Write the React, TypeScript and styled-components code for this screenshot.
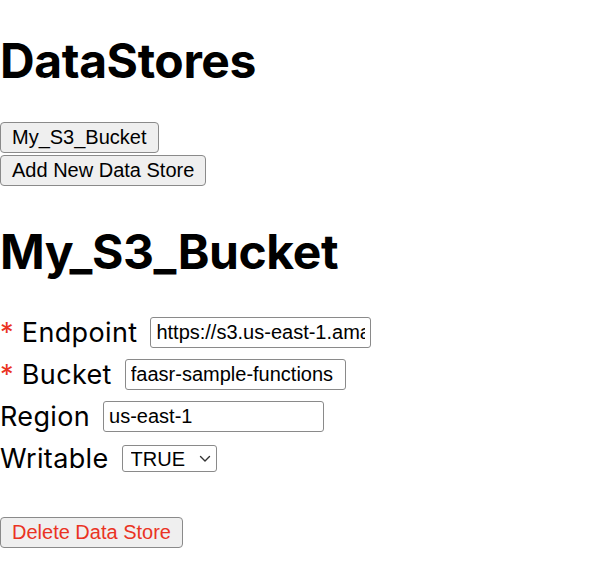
import React from 'react';
import styled, { createGlobalStyle } from 'styled-components';

const GlobalStyle = createGlobalStyle`
  body {
    margin: 0;
    font-family: Inter, "Liberation Sans", sans-serif;
    color: #000;
    background: #fff;
  }
`;

interface Field {
  label: string;
  value: string;
  required?: boolean;
}

const fields: Field[] = [
  { label: 'Endpoint', value: 'https://s3.us-east-1.amazonaws.com', required: true },
  { label: 'Bucket', value: 'faasr-sample-functions', required: true },
  { label: 'Region', value: 'us-east-1' },
];

const Chevron = () => (
  <svg width="12" height="8" viewBox="0 0 12 8" fill="none">
    <path d="M1.5 1.5L6 6l4.5-4.5" stroke="#333" strokeWidth="1.4" strokeLinecap="round" strokeLinejoin="round" />
  </svg>
);

export default function App() {
  return (
    <Page>
      <GlobalStyle />
      <Title>DataStores</Title>
      <StoreList>
        <Button>My_S3_Bucket</Button>
        <Button>Add New Data Store</Button>
      </StoreList>
      <Title $top={37}>My_S3_Bucket</Title>
      <Form>
        {fields.map((f) => (
          <Row key={f.label}>
            <Label>
              {f.required && <Star>* </Star>}
              {f.label}
            </Label>
            <TextInput defaultValue={f.value} />
          </Row>
        ))}
        <Row>
          <Label>Writable</Label>
          <SelectWrap>
            <Select defaultValue="TRUE">
              <option>TRUE</option>
              <option>FALSE</option>
            </Select>
            <ChevronBox>
              <Chevron />
            </ChevronBox>
          </SelectWrap>
        </Row>
      </Form>
      <Button $danger>Delete Data Store</Button>
    </Page>
  );
}

const Page = styled.div`
  display: flex;
  flex-direction: column;
  align-items: flex-start;
`;
const Title = styled.h1<{ $top?: number }>`
  margin: ${(p) => p.$top ?? 32}px 0 32px;

  font-size: 48px;
  font-weight: 700;
  letter-spacing: -0.4px;
  line-height: 58px;
`;
const StoreList = styled.div`
  display: flex;
  flex-direction: column;
  align-items: flex-start;
  gap: 2px;
`;
const Button = styled.button<{ $danger?: boolean }>`
  height: 31px;
  padding: 0 11px;

  font-family: "Liberation Sans", Arial, sans-serif;
  font-size: 20px;
  color: ${(p) => (p.$danger ? '#ea3323' : '#000')};

  background: #efefef;
  border: 1.5px solid #8a8a8a;
  border-radius: 4px;
`;
const Form = styled.div`
  display: flex;
  flex-direction: column;
  gap: 11px;

  margin-top: 4px;
  margin-bottom: 43px;
`;
const Row = styled.div`
  display: flex;
  align-items: center;
  gap: 13px;

  height: 31px;
`;
const Label = styled.span`
  font-size: 27px;
  letter-spacing: 0.35px;
  line-height: 31px;
`;
const Star = styled.span`
  color: #ea3323;
`;
const TextInput = styled.input`
  box-sizing: border-box;
  width: 221px;
  height: 31px;
  padding: 0 5px;

  font-family: "Liberation Sans", Arial, sans-serif;
  font-size: 20px;
  color: #000;

  border: 1.5px solid #8a8a8a;
  border-radius: 3px;
  outline: none;
`;
const SelectWrap = styled.div`
  position: relative;
  width: 95px;
  height: 27px;
`;
const Select = styled.select`
  appearance: none;
  box-sizing: border-box;
  width: 100%;
  height: 100%;
  padding: 0 0 0 8px;

  font-family: "Liberation Sans", Arial, sans-serif;
  font-size: 20px;
  color: #000;

  background: #fff;
  border: 1.5px solid #8a8a8a;
  border-radius: 3px;
  outline: none;
`;
const ChevronBox = styled.div`
  position: absolute;
  right: 6px;
  top: 10px;

  display: flex;
  pointer-events: none;
`;
